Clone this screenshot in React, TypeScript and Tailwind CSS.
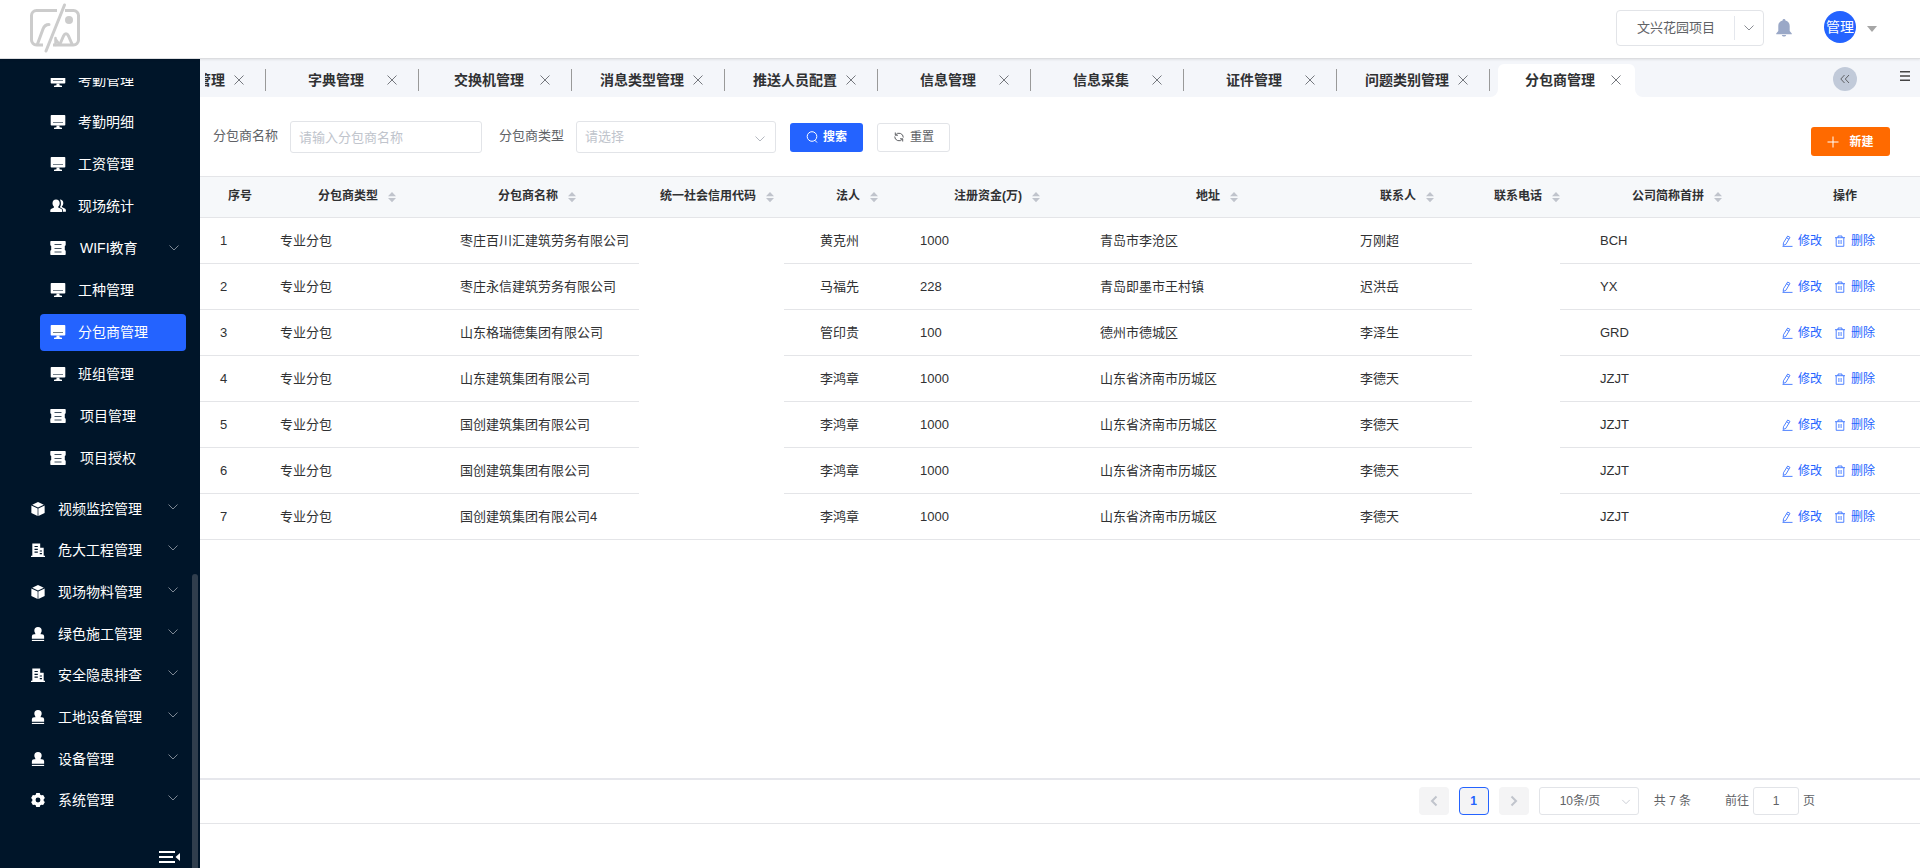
import type { ReactNode } from "react";

type IconProps = { className?: string };

const MonitorIcon = ({ className }: IconProps) => (
  <svg viewBox="0 0 16 16" className={className} fill="currentColor" aria-hidden="true">
    <path d="M1.500 1h13a.8.8 0 0 1 .8.8v8.900a.8.8 0 0 1-.8.8h-13a.8.8 0 0 1-.8-.8V1.800A.8.8 0 0 1 1.500 1z" />
    <path d="M3 8h10v1H3z" fill="#001529" fillOpacity=".55" />
    <path d="M6.500 11.500h3v1.700l2.500.6v1.200H4v-1.200l2.500-.6z" />
  </svg>
);

const UsersIcon = ({ className }: IconProps) => (
  <svg viewBox="0 0 16 16" className={className} fill="currentColor" aria-hidden="true">
    <path d="M6 1.500c2.300 0 3.700 1.600 3.700 3.800 0 1.500-.7 2.700-1.500 3.400v.7l2.800 1.300c.8.400 1.200 1 1.200 2V14H.3v-1.300c0-1 .4-1.600 1.200-2l2.500-1.300v-.7C3.200 8 2.500 6.800 2.500 5.300c0-2.200 1.300-3.800 3.500-3.800z" />
    <path d="M9.800 1.600c2.200 0 3.500 1.500 3.500 3.400 0 1.500-.6 2.600-1.400 3.200v.8l2.800 1.500c.8.400 1.200 1 1.200 2v1.300h-2.900v-1.200c0-1.100-.5-1.900-1.500-2.400l-1.700-.9c.7-.9 1.100-2.100 1.100-3.800 0-1.500-.4-2.900-1.100-3.900z" />
  </svg>
);

const TicketIcon = ({ className }: IconProps) => (
  <svg viewBox="0 0 16 16" className={className} fill="currentColor" aria-hidden="true">
    <path d="M1 1h14a.7.7 0 0 1 .7.7v3.500L14.800 6v4l.9.8v3.500a.7.7 0 0 1-.7.700H1a.7.7 0 0 1-.7-.7v-3.500l.9-.8V6l-.9-.8V1.700A.7.7 0 0 1 1 1z" />
    <path d="M4.500 4h7v1h-7zM4.500 8h7v1h-7zM4.500 11.500h7v1h-7z" fill="#001529" fillOpacity=".75" />
  </svg>
);

const BoxIcon = ({ className }: IconProps) => (
  <svg viewBox="0 0 16 16" className={className} fill="currentColor" aria-hidden="true">
    <path d="M8 0l6.600 3L8 6.300 1.400 3z" />
    <path d="M.4 4l7.200 3.300V16L.4 12.500z" />
    <path d="M15.600 4L8.400 7.300V16l7.200-3.500z" />
  </svg>
);

const BuildingIcon = ({ className }: IconProps) => (
  <svg viewBox="0 0 16 16" className={className} fill="currentColor" aria-hidden="true">
    <path fillRule="evenodd" d="M1.500.5h9v5h4v9H16V16H0v-1.500h1.500zM4 3.400v1.300h3.800V3.400zm0 3.200v1.300h3.800V6.600zm0 3.200v1.300h3.800V9.800zm6-1.300v1.300h2.500V8.500zm0 3v1.300h2.500v-1.300z" />
  </svg>
);

const StampIcon = ({ className }: IconProps) => (
  <svg viewBox="0 0 16 16" className={className} fill="currentColor" aria-hidden="true">
    <path d="M8 0a4.200 4.200 0 0 1 4.200 4.200c0 1.700-1.200 2.500-1.200 4h1.500A2.500 2.500 0 0 1 15 10.700v2.600H1v-2.600a2.500 2.500 0 0 1 2.500-2.500H5c0-1.500-1.200-2.300-1.200-4A4.200 4.200 0 0 1 8 0z" />
    <path d="M1 14.700h14V16H1z" />
  </svg>
);

const GearIcon = ({ className }: IconProps) => (
  <svg viewBox="0 0 16 16" className={className} fill="currentColor" aria-hidden="true">
    <path fillRule="evenodd" d="M6 0h4l.6 1.900 1.300.8 2-.5 2 3.400L14.500 7v2l1.400 1.400-2 3.400-2-.5-1.300.8L10 16H6l-.6-1.900-1.300-.8-2 .5-2-3.400L1.500 9V7L.1 5.600l2-3.400 2 .5 1.300-.8zM8 5.200a2.800 2.800 0 1 0 0 5.600 2.800 2.800 0 0 0 0-5.600z" />
  </svg>
);

const Chevron = ({ className }: IconProps) => (
  <svg viewBox="0 0 12 12" className={className} fill="none" stroke="currentColor" aria-hidden="true">
    <path d="M1.500 3.500L6 8l4.500-4.500" />
  </svg>
);

const CloseIcon = ({ className }: IconProps) => (
  <svg viewBox="0 0 14 14" className={className} fill="none" stroke="currentColor" aria-hidden="true">
    <path d="M2.500 2.500l9 9M11.500 2.500l-9 9" />
  </svg>
);

const EditIcon = ({ className }: IconProps) => (
  <svg viewBox="0 0 12 12" className={className} fill="none" stroke="currentColor" strokeWidth=".8" aria-hidden="true">
    <path d="M6.700 1l2.300 1.400-4.200 7-2.600 1 .3-2.700zM5.600 2.800l2.300 1.400M1.500 11.400h10" />
  </svg>
);

const TrashIcon = ({ className }: IconProps) => (
  <svg viewBox="0 0 12 12" className={className} fill="none" stroke="currentColor" strokeWidth=".8" aria-hidden="true">
    <path d="M1 2.700h10M4 2.700V1h4v1.700M2.200 2.700v8.600h7.600V2.700M4.900 5v4M7.100 5v4" />
  </svg>
);

const SortIcon = () => (
  <svg viewBox="0 0 8 12" className="h-3 w-2" fill="#c0c4cc" aria-hidden="true">
    <path d="M4 1l4 4.300H0zM4 11.300L0 7h8z" />
  </svg>
);

type Item = { label: string; icon: (p: IconProps) => ReactNode; open?: boolean; active?: boolean };

const subItems: Item[] = [
  { label: "考勤管理", icon: MonitorIcon },
  { label: "考勤明细", icon: MonitorIcon },
  { label: "工资管理", icon: MonitorIcon },
  { label: "现场统计", icon: UsersIcon },
  { label: "WIFI教育", icon: TicketIcon, open: true },
  { label: "工种管理", icon: MonitorIcon },
  { label: "分包商管理", icon: MonitorIcon, active: true },
  { label: "班组管理", icon: MonitorIcon },
  { label: "项目管理", icon: TicketIcon },
  { label: "项目授权", icon: TicketIcon },
];

const mainItems: Item[] = [
  { label: "视频监控管理", icon: BoxIcon },
  { label: "危大工程管理", icon: BuildingIcon },
  { label: "现场物料管理", icon: BoxIcon },
  { label: "绿色施工管理", icon: StampIcon },
  { label: "安全隐患排查", icon: BuildingIcon },
  { label: "工地设备管理", icon: StampIcon },
  { label: "设备管理", icon: StampIcon },
  { label: "系统管理", icon: GearIcon },
];

const tabs = ["设备类型管理", "字典管理", "交换机管理", "消息类型管理", "推送人员配置", "信息管理", "信息采集", "证件管理", "问题类别管理"];

const columns = [
  { label: "序号", width: "w-[60px]", sort: false },
  { label: "分包商类型", width: "w-[180px]", sort: true },
  { label: "分包商名称", width: "w-[180px]", sort: true },
  { label: "统一社会信用代码", width: "w-[180px]", sort: true },
  { label: "法人", width: "w-[100px]", sort: true },
  { label: "注册资金(万)", width: "w-[180px]", sort: true },
  { label: "地址", width: "w-[260px]", sort: true },
  { label: "联系人", width: "w-[120px]", sort: true },
  { label: "联系电话", width: "w-[120px]", sort: true },
  { label: "公司简称首拼", width: "w-[180px]", sort: true },
  { label: "操作", width: "w-[160px]", sort: false },
];

const rows = [
  ["枣庄百川汇建筑劳务有限公司", "黄克州", "1000", "青岛市李沧区", "万刚超", "BCH"],
  ["枣庄永信建筑劳务有限公司", "马福先", "228", "青岛即墨市王村镇", "迟洪岳", "YX"],
  ["山东格瑞德集团有限公司", "管印贵", "100", "德州市德城区", "李泽生", "GRD"],
  ["山东建筑集团有限公司", "李鸿章", "1000", "山东省济南市历城区", "李德天", "JZJT"],
  ["国创建筑集团有限公司", "李鸿章", "1000", "山东省济南市历城区", "李德天", "JZJT"],
  ["国创建筑集团有限公司", "李鸿章", "1000", "山东省济南市历城区", "李德天", "JZJT"],
  ["国创建筑集团有限公司4", "李鸿章", "1000", "山东省济南市历城区", "李德天", "JZJT"],
];

function Header() {
  return (
    <header className="relative z-10 flex h-[59px] shrink-0 items-start justify-between border-b border-[#dcdde0] bg-white shadow-[0_1px_2px_rgba(0,0,0,0.08)]">
      <svg viewBox="0 0 52 52" className="ml-[29px] mt-[2px] size-[52px]" fill="none" stroke="#cccccc" strokeWidth="3" strokeLinecap="round" strokeLinejoin="round" aria-hidden="true">
        <path d="M28 8.500H7.500a5 5 0 0 0-5 5V38a5 5 0 0 0 5 5H14" strokeLinecap="butt" />
        <path d="M36 8.500h8.500a5 5 0 0 1 5 5V38a5 5 0 0 1-5 5H24" strokeLinecap="butt" />
        <path d="M35.500 3L17 49" />
        <path d="M8.500 42L14 27c1.500-4 3.500-4.500 6-4.500" />
        <path d="M26.500 36v7M26.500 37l4 5.500" strokeWidth="2.500" />
        <path d="M31 42l3.500-8c1.500-3 3.500-3 5 0l3.500 8" />
        <circle cx="40" cy="18" r="4" fill="#cccccc" stroke="none" />
      </svg>
      <div className="flex items-center pr-[43px] pt-[10px]">
        <button className="flex h-9 w-[148px] items-center rounded border border-[#e2e4e8] pl-5 text-[13px] text-[#606266]">
          <span className="flex-1 text-left">文兴花园项目</span>
          <span className="h-6 border-l border-[#e4e7ed]" />
          <Chevron className="mx-2 h-3 w-3 text-[#8a8d94]" />
        </button>
        <svg viewBox="0 0 16 18" className="ml-3 h-[18px] w-4" fill="#9aa8c7" aria-label="消息">
          <path d="M8 0a1.400 1.400 0 0 1 1.400 1.500C12.200 2.200 13.700 4.300 13.700 7v5l2.100 2.500v.7H.2v-.7L2.300 12V7c0-2.700 1.500-4.800 4.300-5.500A1.400 1.400 0 0 1 8 0z" />
          <path d="M5.800 16h4.400c-.3 1-1.200 1.600-2.200 1.600S6.100 17 5.800 16z" />
        </svg>
        <button className="mb-[2px] ml-8 flex items-center gap-[11px]">
          <span className="flex size-8 items-center justify-center rounded-full bg-[#2463ff] text-sm whitespace-nowrap text-white">管理</span>
          <svg viewBox="0 0 10 6" className="mt-1 h-[6px] w-[10px]" fill="#a6a6a6" aria-hidden="true"><path d="M0 0h10L5 6z" /></svg>
        </button>
      </div>
    </header>
  );
}

function Sidebar() {
  return (
    <aside className="flex w-[200px] shrink-0 bg-[#001529] pt-[19px] text-sm text-white">
      <div className="flex min-w-0 flex-1 flex-col">
        <nav className="min-h-0 flex-1 overflow-hidden">
          <ul className="-mt-[19px] mb-[9px] pl-10 pr-[6px]">
            {subItems.map(({ label, icon: Icon, open, active }) => (
              <li key={label} className="flex h-[42px] items-center">
                <a href="#" className={active ? "flex h-[37px] flex-1 items-center rounded bg-[#2463ff] pl-[10px]" : "flex h-[37px] flex-1 items-center pl-[10px]"}>
                  <Icon className="size-4" />
                  <span className={Icon === TicketIcon ? "ml-[14px] flex-1" : "ml-3 flex-1"}>{label}</span>
                  {open && <Chevron className="mr-[6px] h-3 w-3 text-[#7d8793]" />}
                </a>
              </li>
            ))}
          </ul>
          <ul className="flex h-[333px] flex-col pl-[31px] pr-[13px]">
            {mainItems.map(({ label, icon: Icon }) => (
              <li key={label} className="flex flex-1">
                <a href="#" className="flex flex-1 items-center">
                  <Icon className="size-[14px]" />
                  <span className="ml-[13px] flex-1">{label}</span>
                  <Chevron className="mb-1 h-3 w-3 text-[#7d8793]" />
                </a>
              </li>
            ))}
          </ul>
        </nav>
        <button className="mb-1 mr-[11px] self-end" aria-label="收起菜单">
          <svg viewBox="0 0 22 14" className="h-[14px] w-[22px]" fill="currentColor" aria-hidden="true">
            <path d="M0 1h16v2H0zM0 6h14v2H0zM0 11h16v2H0zM21 3v8l-4.500-4z" />
          </svg>
        </button>
      </div>
      <div className="mr-[2px] flex w-[6px] flex-col justify-end">
        <div className="h-[294px] rounded-t-full bg-[#303e4d]" />
      </div>
    </aside>
  );
}

function TabBar() {
  return (
    <div className="flex h-[38px] shrink-0 items-start bg-[#f4f6fa] pl-[5px] text-sm font-bold text-[#303133]">
      <div className="flex min-w-0 flex-1 justify-start overflow-hidden">
        <div className="-ml-[92px] flex shrink-0">
          {tabs.map((tab) => (
            <div key={tab} className="flex w-[153px] shrink-0 items-start pt-[10px]">
              <div className="flex h-[22px] flex-1 items-center border-r border-[#999999] pl-7">
                <button className="w-[84px] text-center whitespace-nowrap">{tab}</button>
                <button className="ml-[7px]" aria-label="关闭"><CloseIcon className="size-[14px] text-[#75787e]" /></button>
              </div>
            </div>
          ))}
          <div className="flex items-end pt-[5px]">
            <span className="size-2 bg-white"><span className="block size-2 rounded-br-lg bg-[#f4f6fa]" /></span>
            <div className="flex h-[33px] w-[137px] items-center rounded-t-md bg-white pb-[2px] pl-5">
              <button className="w-[84px] text-center whitespace-nowrap">分包商管理</button>
              <button className="ml-[7px]" aria-label="关闭"><CloseIcon className="size-[14px] text-[#75787e]" /></button>
            </div>
            <span className="size-2 bg-white"><span className="block size-2 rounded-bl-lg bg-[#f4f6fa]" /></span>
          </div>
        </div>
      </div>
      <button className="mt-2 flex size-6 shrink-0 items-center justify-center rounded-full bg-[#c1cad9]" aria-label="向左滚动">
        <svg viewBox="0 0 12 12" className="size-3" fill="none" stroke="#606266" aria-hidden="true"><path d="M5.500 2L1.800 6l3.700 4M10 2L6.300 6l3.700 4" /></svg>
      </button>
      <button className="mr-[10px] ml-[43px] mt-3 shrink-0" aria-label="标签菜单">
        <svg viewBox="0 0 10 10" className="size-[10px]" fill="#444444" aria-hidden="true"><path d="M0 0h10v1.500H0zM0 4.200h10v1.500H0zM0 8.500h10V10H0z" /></svg>
      </button>
    </div>
  );
}

function Filters() {
  return (
    <form className="flex h-[79px] shrink-0 items-start justify-between pl-[13px] pr-[30px] pt-6 text-[13px] text-[#606266]">
      <div className="flex items-center">
        <label htmlFor="name" className="pb-[2px]">分包商名称</label>
        <input id="name" placeholder="请输入分包商名称" className="ml-3 h-8 w-48 rounded-[3px] border border-[#e2e4e8] px-2 placeholder:text-[#c0c4cc]" />
        <label htmlFor="type" className="ml-[17px] pb-[2px]">分包商类型</label>
        <span className="relative ml-3">
          <select id="type" className="h-8 w-[200px] appearance-none rounded-[3px] border border-[#e2e4e8] px-2 text-[#c0c4cc]">
            <option>请选择</option>
          </select>
          <Chevron className="pointer-events-none absolute top-3 right-[10px] h-3 w-3 text-[#b4b8c0]" />
        </span>
        <button type="button" className="ml-[14px] flex h-[29px] w-[73px] items-center justify-center gap-[5px] rounded-[3px] bg-[#2463ff] text-xs font-bold text-white">
          <svg viewBox="0 0 12 12" className="size-3" fill="none" stroke="currentColor" aria-hidden="true"><circle cx="6" cy="5.500" r="4.800" /><path d="M8.800 9.200L11 11.500" /></svg>
          搜索
        </button>
        <button type="reset" className="ml-[14px] flex h-[29px] w-[73px] items-center justify-center gap-[5px] rounded-[3px] border border-[#e2e4e8] text-xs">
          <svg viewBox="0 0 12 12" className="size-3" fill="none" stroke="currentColor" aria-hidden="true">
            <path d="M2.500 4A4.300 4.300 0 0 1 10.300 6.500M2.300 1.500V4.200H5M9.500 8A4.300 4.300 0 0 1 1.700 5.500M9.700 10.500V7.800H7" />
          </svg>
          重置
        </button>
      </div>
      <button type="button" className="mt-[6px] flex h-[29px] w-[79px] items-center justify-center gap-[10px] rounded-[3px] bg-[#ff6a00] text-xs font-bold text-white">
        <svg viewBox="0 0 12 12" className="size-3" fill="none" stroke="currentColor" aria-hidden="true"><path d="M6 .5v11M.5 6h11" /></svg>
        新建
      </button>
    </form>
  );
}

const cell = "border-b border-[#e4e5e8] pl-5 whitespace-nowrap";

function BlankCell({ cover }: { cover: string }) {
  return (
    <td className="group relative border-b border-[#e4e5e8]">
      <span className={cover} />
    </td>
  );
}

function DataTable() {
  return (
    <table className="w-full table-fixed border-separate border-spacing-0 text-[13px] text-[#303133]">
      <thead>
        <tr className="h-[42px] bg-[#f6f8fa] text-xs">
          {columns.map((c) => (
            <th key={c.label} className={c.width + " border-t border-b border-[#e4e5e8] pb-[2px] pl-5 font-bold whitespace-nowrap last:pr-[10px]"}>
              <div className="flex items-center justify-center">
                {c.label}
                {c.sort && <span className="mt-[2px] flex w-6 justify-center pl-[3px]"><SortIcon /></span>}
              </div>
            </th>
          ))}
        </tr>
      </thead>
      <tbody>
        {rows.map(([name, person, capital, address, contact, code], i) => (
          <tr key={i} className="group/row h-[46px]">
            <td className={cell}>{i + 1}</td>
            <td className={cell}>专业分包</td>
            <td className={cell}>{name}</td>
            <BlankCell cover="absolute top-0 right-4 left-[19px] -bottom-px bg-white group-last/row:bottom-0" />
            <td className={cell}>{person}</td>
            <td className={cell}>{capital}</td>
            <td className={cell}>{address}</td>
            <td className={cell}>{contact}</td>
            <BlankCell cover="absolute top-0 right-5 left-3 -bottom-px bg-white group-last/row:bottom-0" />
            <td className={cell}>{code}</td>
            <td className={cell}>
              <div className="flex items-center pl-px text-xs text-[#2463ff]">
                <button className="flex items-center gap-[5px]"><EditIcon className="size-3" />修改</button>
                <button className="ml-3 flex items-center gap-[5px]"><TrashIcon className="size-3" />删除</button>
              </div>
            </td>
          </tr>
        ))}
      </tbody>
    </table>
  );
}

function Pagination() {
  return (
    <footer className="mb-11 flex h-[46px] shrink-0 items-center justify-end border-t-2 border-b border-t-[#e6e7ec] border-b-[#e4e5e8] pr-[105px] pb-[2px] text-xs text-[#606266]">
      <button disabled aria-label="上一页" className="flex h-7 w-[30px] items-center justify-center rounded-sm bg-[#f4f4f5]">
        <Chevron className="h-3 w-3 rotate-90 stroke-2 text-[#c0c4cc]" />
      </button>
      <button className="ml-[10px] h-7 w-[30px] rounded-sm border border-[#2463ff] bg-[#f4f4f5] font-bold text-[#2463ff]">1</button>
      <button disabled aria-label="下一页" className="ml-[10px] flex h-7 w-[30px] items-center justify-center rounded-sm bg-[#f4f4f5]">
        <Chevron className="h-3 w-3 -rotate-90 stroke-2 text-[#c0c4cc]" />
      </button>
      <span className="relative ml-[10px]">
        <select aria-label="每页条数" className="h-7 w-[100px] appearance-none rounded-[3px] border border-[#e2e4e8] pl-5">
          <option>10条/页</option>
        </select>
        <Chevron className="pointer-events-none absolute top-[10px] right-2 h-[10px] w-[10px] text-[#c0c4cc]" />
      </span>
      <span className="ml-[15px]">共 7 条</span>
      <label className="ml-[34px] flex items-center gap-1">
        前往
        <input defaultValue="1" className="h-7 w-[46px] rounded-[3px] border border-[#e2e4e8] text-center" />
        页
      </label>
    </footer>
  );
}

export default function App() {
  return (
    <div className="flex h-screen flex-col overflow-hidden bg-white font-['Liberation_Sans','Noto_Sans_CJK_SC',sans-serif]">
      <Header />
      <div className="flex min-h-0 flex-1">
        <Sidebar />
        <main className="flex min-w-0 flex-1 flex-col">
          <TabBar />
          <Filters />
          <div className="min-h-0 flex-1 overflow-hidden">
            <DataTable />
          </div>
          <Pagination />
        </main>
      </div>
    </div>
  );
}
